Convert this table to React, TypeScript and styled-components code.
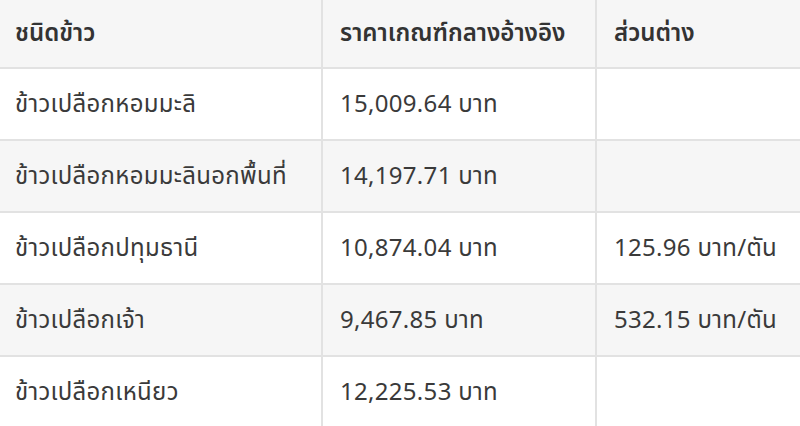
import React from "react";
import styled, { createGlobalStyle } from "styled-components";

const Global = createGlobalStyle`
  html, body { margin: 0; padding: 0; background: #fff; }
  body { font-family: "Noto Sans", "Noto Sans Thai", "Noto Sans Thai UI", sans-serif; color: #333; overflow: hidden; }
`;

const Grid = styled.div`
  display: grid;
  grid-template-columns: 321px 272px 203px;
  grid-auto-rows: 70px;
  grid-template-rows: 67px;
  gap: 2px;
  background: #e2e2e2;
  width: 800px;
  height: 426px;
  overflow: hidden;
`;

const Cell = styled.div<{ $head?: boolean; $shade?: boolean; $first?: boolean }>`
  display: flex;
  align-items: center;
  padding-left: ${(p) => (p.$first ? "15px" : "17px")};
  background: ${(p) => (p.$head || p.$shade ? "#f6f6f6" : "#fff")};
  font-size: 24px;
  font-weight: ${(p) => (p.$head ? 600 : 400)};
  letter-spacing: ${(p) => (p.$head ? "0" : "0.3px")};
  color: ${(p) => (p.$head ? "#333" : "#3a3a3a")};
  white-space: nowrap;
`;

const rows: [string, string, string][] = [
  ["ข้าวเปลือกหอมมะลิ", "15,009.64 บาท", ""],
  ["ข้าวเปลือกหอมมะลินอกพื้นที่", "14,197.71 บาท", ""],
  ["ข้าวเปลือกปทุมธานี", "10,874.04 บาท", "125.96 บาท/ตัน"],
  ["ข้าวเปลือกเจ้า", "9,467.85 บาท", "532.15 บาท/ตัน"],
  ["ข้าวเปลือกเหนียว", "12,225.53 บาท", ""],
];

export default function App() {
  return (
    <>
      <Global />
      <Grid>
        <Cell $head $first>ชนิดข้าว</Cell>
        <Cell $head>ราคาเกณฑ์กลางอ้างอิง</Cell>
        <Cell $head>ส่วนต่าง</Cell>
        {rows.map((r, i) => (
          <React.Fragment key={i}>
            <Cell $first $shade={i % 2 === 1}>{r[0]}</Cell>
            <Cell $shade={i % 2 === 1}>{r[1]}</Cell>
            <Cell $shade={i % 2 === 1}>{r[2]}</Cell>
          </React.Fragment>
        ))}
      </Grid>
    </>
  );
}
